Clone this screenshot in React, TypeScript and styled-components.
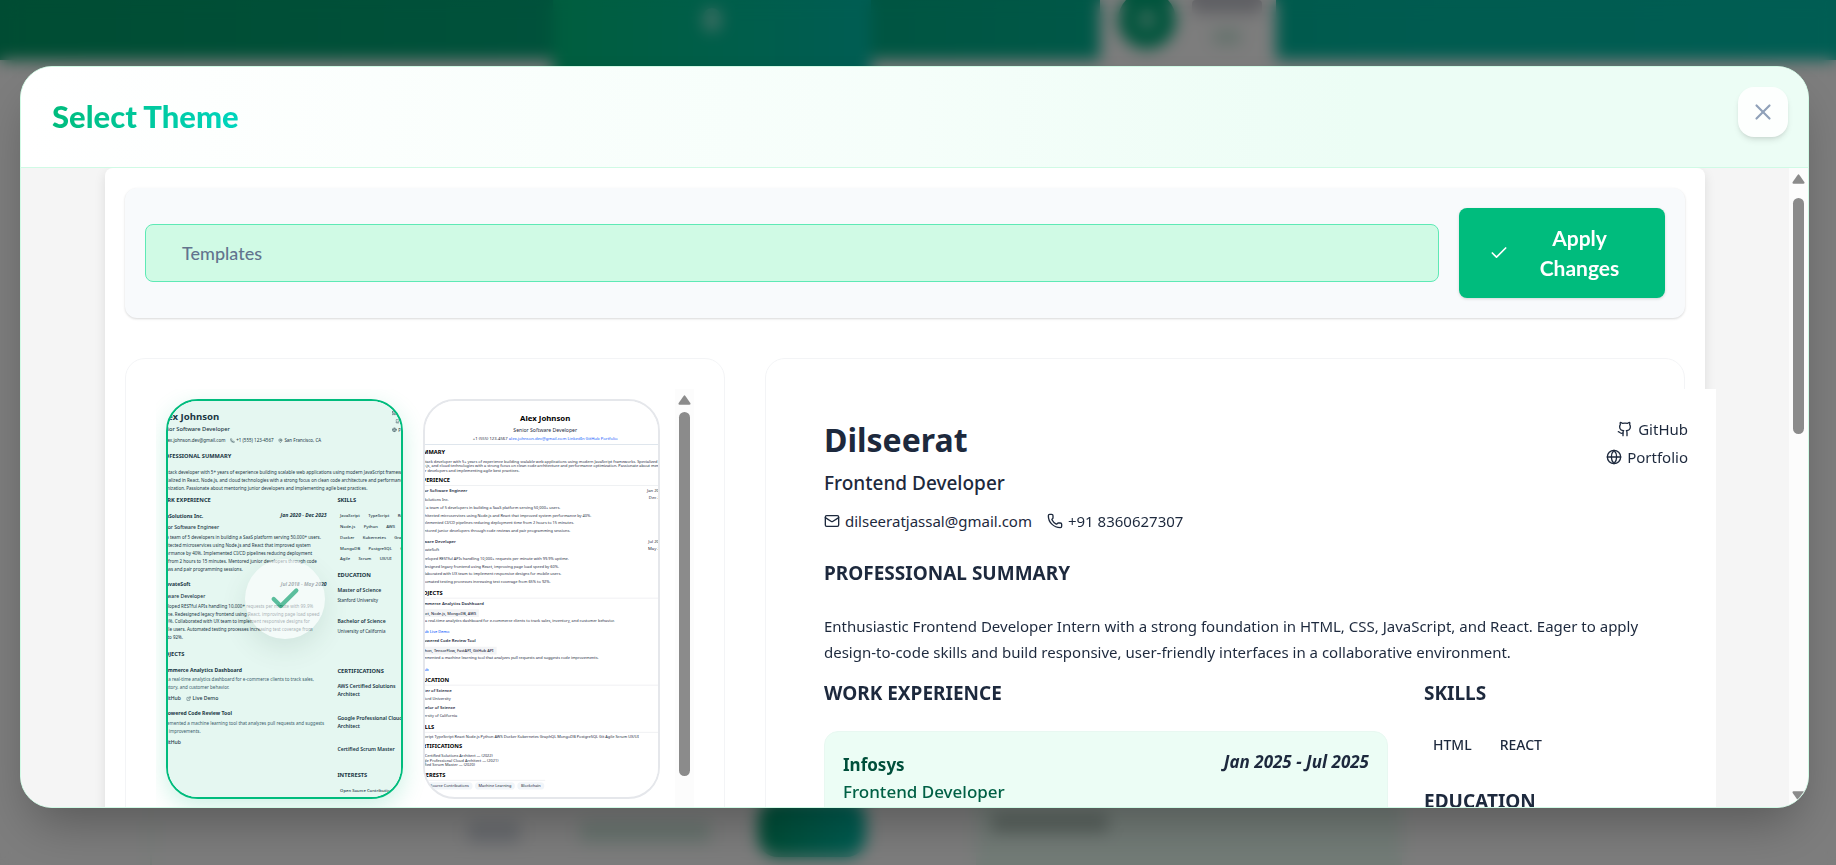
import React from 'react';
import styled, { createGlobalStyle, css } from 'styled-components';
import { Check, ExternalLink, Github, Globe, Linkedin, Mail, MapPin, Phone, X } from 'lucide-react';

const display = `Lato, "Open Sans", sans-serif`;
const body = `"Noto Sans", "Open Sans", sans-serif`;

const GlobalStyle = createGlobalStyle`
  *, *::before, *::after { box-sizing: border-box; }
  html, body, #root { height: 100%; }
  body { margin: 0; overflow: hidden; background: #fafafa; color: #1d293d; font-family: ${body}; }
  h1, h2, h3, h4, p, ul { margin: 0; padding: 0; font: inherit; }
  ul { list-style: none; }
  a { color: inherit; text-decoration: none; }
  button { font: inherit; border: 0; cursor: pointer; }
`;

/* ---------- page behind the dialog ---------- */

const Page = styled.div`
  height: 100vh;
  display: flex;
  flex-direction: column;
  justify-content: space-between;
  overflow: hidden;
`;

const TopBar = styled.header`
  height: 60px;
  display: grid;
  grid-template-columns: 553fr 318fr 229fr 176fr 560fr;
  background: linear-gradient(90deg, #009966, #00a77c 40%, #00b79f 75%, #00bba7);
`;

const TopTab = styled.div`
  grid-column: 2;
  height: 90px;
  padding-top: 8px;
  display: flex;
  justify-content: center;
  background: linear-gradient(90deg, #00bc7d, #00bba7);
`;

const TabDot = styled.span`
  width: 18px;
  height: 24px;
  border-radius: 9px;
  background: rgba(255, 255, 255, 0.5);
`;

const TopCard = styled.div`
  grid-column: 4;
  height: 90px;
  padding: 0 14px 0 18px;
  display: flex;
  gap: 16px;
  background: #fafafa;
`;

const Avatar = styled.span`
  width: 58px;
  height: 58px;
  margin-top: -9px;
  flex: none;
  border-radius: 50%;
  background: radial-gradient(circle, #8fe0c4 4px, #00a878 12px);
`;

const NameBars = styled.div`
  flex: 1;
  display: flex;
  flex-direction: column;
  align-items: center;
  gap: 16px;
`;

const Bar = styled.span<{ $w: string; $h: number; $c: string }>`
  display: block;
  width: ${(p) => p.$w};
  height: ${(p) => p.$h}px;
  border-radius: 4px;
  background: ${(p) => p.$c};
`;

const PageFoot = styled.footer`
  height: 66px;
  display: grid;
  grid-template-columns: 150fr 608fr 108fr 110fr 426fr 434fr;
`;

const FootActions = styled.div`
  grid-column: 2;
  display: flex;
  justify-content: flex-end;
  align-items: center;
  gap: 60px;
  padding-right: 48px;
  border-left: 2px solid #dff5ea;
`;

const FootPill = styled.span`
  height: 58px;
  border-radius: 20px;
  background: linear-gradient(90deg, #00996a, #00bba7);
`;

const FootCard = styled.div`
  grid-column: 5;
  padding: 14px 16px;
  background: #e6f8ef;
`;

/* ---------- dialog ---------- */

const Backdrop = styled.div`
  position: fixed;
  inset: 0;
  display: flex;
  padding: 66px 27px 57px 20px;
  background: rgba(0, 0, 0, 0.5);
  backdrop-filter: blur(8px);
`;

const Dialog = styled.section`
  flex: 1;
  min-width: 0;
  display: flex;
  flex-direction: column;
  overflow: hidden;
  border: 1px solid #d0fae5;
  border-radius: 32px;
  background: #fff;
  box-shadow: 0 25px 50px -12px rgba(0, 0, 0, 0.3);
`;

const DialogHeader = styled.header`
  flex: none;
  display: flex;
  justify-content: space-between;
  align-items: flex-start;
  padding: 0 20px 0 31px;
  border-bottom: 1px solid #d0fae5;
  background: linear-gradient(90deg, #fff, #f5fefa 50%, #ecfdf5 75%, #ecfdf5);
`;

const DialogTitle = styled.h1`
  padding: 28px 0 30px;
  font: 900 31px/42px ${display};
  color: transparent;
  background: linear-gradient(90deg, #00bc7d, #00d5be);
  background-clip: text;
`;

const CloseButton = styled.button`
  width: 50px;
  height: 50px;
  margin-top: 20px;
  display: flex;
  align-items: center;
  justify-content: center;
  border-radius: 16px;
  background: #fdfffe;
  color: #90a1b9;
  box-shadow: 0 4px 6px -1px rgba(0, 0, 0, 0.1), 0 2px 4px -2px rgba(0, 0, 0, 0.1);
`;

const DialogBody = styled.div`
  flex: 1;
  min-height: 0;
  display: flex;
`;

const ScrollArea = styled.div`
  flex: 1;
  min-width: 0;
  overflow: hidden;
  background: #f5f5f5;
`;

const Workspace = styled.main`
  max-width: 1600px;
  margin: 0 auto;
  padding: 20px;
  border-radius: 8px;
  background: #fff;
  box-shadow: 0 4px 12px rgba(0, 0, 0, 0.1);
`;

const Track = styled.div`
  flex: none;
  width: 19px;
  padding: 6px 0;
  display: flex;
  flex-direction: column;
  align-items: center;
  background: #fcfcfc;
`;

const Thumb = styled.span<{ $gap: number; $length: number }>`
  width: 11px;
  height: ${(p) => p.$length}px;
  margin: ${(p) => p.$gap}px 0 auto;
  border-radius: 6px;
  background: #8b8b8b;
`;

function Scrollbar({ gap, length }: { gap: number; length: number }) {
  return (
    <Track aria-hidden="true">
      <svg width="13" height="10" viewBox="0 0 13 10">
        <path d="M5.6.9a1.1 1.1 0 0 1 1.8 0l4.9 7.2c.5.8.1 1.6-.8 1.6H1.5c-.9 0-1.3-.8-.8-1.6z" fill="#8b8b8b" />
      </svg>
      <Thumb $gap={gap} $length={length} />
      <svg width="13" height="10" viewBox="0 0 13 10">
        <path d="M5.6 9.1a1.1 1.1 0 0 0 1.8 0l4.9-7.2c.5-.8.1-1.6-.8-1.6H1.5c-.9 0-1.3.8-.8 1.6z" fill="#8b8b8b" />
      </svg>
    </Track>
  );
}

/* ---------- toolbar ---------- */

const Toolbar = styled.div`
  display: flex;
  align-items: center;
  gap: 20px;
  padding: 20px;
  border-radius: 12px;
  background: #f8fafc;
  box-shadow: 0 1px 3px rgba(0, 0, 0, 0.1), 0 1px 2px rgba(0, 0, 0, 0.06);
`;

const TemplatesTab = styled.button`
  flex: 1;
  padding: 14px 36px;
  border: 1px solid #5ee9b5;
  border-radius: 8px;
  background: #d0fae5;
  color: #62748e;
  font: 500 18px/28px ${display};
  text-align: left;
`;

const ApplyButton = styled.button`
  flex: none;
  width: 206px;
  display: flex;
  align-items: center;
  gap: 15px;
  padding: 15px 30px;
  border-radius: 8px;
  background: #00bc7d;
  color: #fff;
  font: 700 21px/30px ${display};
  box-shadow: 0 1px 3px rgba(0, 0, 0, 0.15);

  svg { flex: none; }
  span { flex: 1; }
`;

/* ---------- panels ---------- */

const Panels = styled.div`
  display: grid;
  grid-template-columns: 600fr 920fr;
  gap: 40px;
  margin-top: 40px;
`;

const Panel = styled.section`
  min-width: 0;
  padding: 30px;
  border: 1px solid #f3f4f6;
  border-radius: 20px;
  background: #fff;
`;

const GalleryScroller = styled.div`
  display: flex;
  height: 500px;
  overflow: hidden;
`;

const Gallery = styled.div`
  flex: 1;
  display: grid;
  grid-template-columns: 1fr 1fr;
  align-content: start;
  gap: 20px;
  padding: 10px 15px 10px 10px;
`;

const TemplateCard = styled.button<{ $selected?: boolean }>`
  position: relative;
  height: 400px;
  min-width: 0;
  display: flex;
  justify-content: center;
  align-items: flex-start;
  padding: 0 0 0 4px;
  overflow: hidden;
  border: 2px solid ${(p) => (p.$selected ? '#00bc7d' : '#e5e7eb')};
  border-radius: 32px;
  background: #fff;
  color: inherit;
  text-align: left;
  ${(p) => p.$selected && css`box-shadow: 0 8px 24px rgba(0, 188, 125, 0.2);`}
`;

const Miniature = styled.div`
  flex: none;
  width: 920px;
  transform: scale(0.3);
  transform-origin: top center;
`;

const SelectedVeil = styled.span`
  position: absolute;
  inset: 0;
  display: flex;
  align-items: center;
  justify-content: center;
  background: rgba(0, 172, 115, 0.1);
`;

const SelectedMark = styled.span`
  width: 80px;
  height: 80px;
  display: flex;
  align-items: center;
  justify-content: center;
  border-radius: 50%;
  background: #fff;
  color: #009966;
  opacity: 0.6;
  box-shadow: 0 10px 25px rgba(0, 60, 40, 0.15);
`;

/* ---------- modern resume ---------- */

const Sheet = styled.article`
  padding: 28px;
  background: #fff;
  font: 400 15px/26px ${body};
  color: #1d293d;
`;

const PreviewSheet = styled(Sheet)`
  width: calc(100% + 62px);
`;

const SheetTop = styled.div`
  display: flex;
  justify-content: space-between;
`;

const PersonName = styled.h2`
  font-size: 32px;
  font-weight: 700;
  line-height: 46px;
`;

const PersonRole = styled.p`
  margin-top: 6px;
  font-size: 19px;
  font-weight: 500;
  line-height: 28px;
`;

const ContactRow = styled.div`
  display: flex;
  gap: 15px;
  margin-top: 12px;
`;

const IconText = styled.span`
  display: flex;
  align-items: center;
  gap: 5px;
  line-height: 24px;
`;

const LinkList = styled.div`
  display: flex;
  flex-direction: column;
  align-items: flex-end;
  gap: 4px;
`;

const Heading = styled.h3<{ $top?: number }>`
  margin-top: ${(p) => p.$top ?? 0}px;
  font-size: 19px;
  font-weight: 700;
  line-height: 28px;
  text-transform: uppercase;
`;

const Summary = styled.p`
  margin: 26px 0 14px;
`;

const Columns = styled.div`
  display: grid;
  grid-template-columns: 1fr 264px;
  gap: 36px;
`;

const Job = styled.div<{ $tinted?: boolean }>`
  margin-top: ${(p) => (p.$tinted ? 24 : 26)}px;
  display: grid;
  grid-template-columns: 1fr auto;
  ${(p) =>
    p.$tinted &&
    css`
      padding: 19px 18px;
      border: 1px solid #e8f8f1;
      border-radius: 14px;
      background: #ecfdf5;
    `}
`;

const Company = styled.h4<{ $tinted?: boolean }>`
  font-size: 17px;
  font-weight: 700;
  line-height: 27px;
  color: ${(p) => (p.$tinted ? '#004f3b' : '#1d293d')};
`;

const JobRole = styled.p<{ $tinted?: boolean }>`
  grid-column: 1 / -1;
  margin-top: ${(p) => (p.$tinted ? 0 : 10)}px;
  font-size: 17px;
  font-weight: 500;
  line-height: 27px;
  color: ${(p) => (p.$tinted ? '#006045' : '#1d293d')};
`;

const JobText = styled.p`
  grid-column: 1 / -1;
  margin-top: 8px;
  padding-right: 14px;
`;

const Dates = styled.span`
  font-size: 17px;
  font-style: italic;
  font-weight: 700;
  line-height: 22px;
`;

const Chips = styled.ul`
  display: flex;
  flex-wrap: wrap;
  gap: 8px 10px;
  margin-top: 24px;
`;

const Chip = styled.li`
  padding: 0 9px;
  font-size: 14px;
  font-weight: 500;
  line-height: 28px;
`;

const Project = styled.div<{ $top: number }>`
  margin-top: ${(p) => p.$top}px;
`;

const ProjectText = styled.p`
  margin-top: 5px;
  color: #45556c;
`;

const ProjectLinks = styled.div`
  display: flex;
  gap: 18px;
  margin-top: 14px;
  font-size: 17px;
  font-weight: 500;
`;

const SideItem = styled.div<{ $top: number }>`
  margin-top: ${(p) => p.$top}px;
`;

const SideTitle = styled.h4`
  padding-right: 20px;
  font-size: 17px;
  font-weight: 600;
  line-height: 26px;
`;

const SideText = styled.p`
  margin-top: 7px;
`;

function ResumePreview() {
  return (
    <PreviewSheet>
      <SheetTop>
        <div>
          <PersonName>Dilseerat</PersonName>
          <PersonRole>Frontend Developer</PersonRole>
          <ContactRow>
            <IconText><Mail size={16} /> dilseeratjassal@gmail.com</IconText>
            <IconText><Phone size={16} /> +91 8360627307</IconText>
          </ContactRow>
        </div>
        <LinkList>
          <a href="#github"><IconText><Github size={16} /> GitHub</IconText></a>
          <a href="#portfolio"><IconText><Globe size={16} /> Portfolio</IconText></a>
        </LinkList>
      </SheetTop>
      <Heading $top={26}>Professional Summary</Heading>
      <Summary>
        Enthusiastic Frontend Developer Intern with a strong foundation in HTML, CSS, JavaScript, and React. Eager to
        apply design-to-code skills and build responsive, user-friendly interfaces in a collaborative environment.
      </Summary>
      <Columns>
        <div>
          <Heading>Work Experience</Heading>
          <Job $tinted>
            <Company $tinted>Infosys</Company>
            <Dates>Jan 2025 - Jul 2025</Dates>
            <JobRole $tinted>Frontend Developer</JobRole>
          </Job>
        </div>
        <div>
          <Heading>Skills</Heading>
          <Chips>
            <Chip>HTML</Chip>
            <Chip>REACT</Chip>
          </Chips>
          <Heading $top={28}>Education</Heading>
        </div>
      </Columns>
    </PreviewSheet>
  );
}

const skills = ['JavaScript', 'TypeScript', 'React', 'Node.js', 'Python', 'AWS', 'Docker', 'Kubernetes', 'GraphQL', 'MongoDB', 'PostgreSQL', 'Git', 'Agile', 'Scrum', 'UX/UI'];

function ModernTemplate() {
  return (
    <Sheet>
      <SheetTop>
        <div>
          <PersonName>Alex Johnson</PersonName>
          <PersonRole>Senior Software Developer</PersonRole>
          <ContactRow>
            <IconText><Mail size={16} /> alex.johnson.dev@gmail.com</IconText>
            <IconText><Phone size={16} /> +1 (555) 123-4567</IconText>
            <IconText><MapPin size={16} /> San Francisco, CA</IconText>
          </ContactRow>
        </div>
        <LinkList>
          <IconText><Linkedin size={16} /> LinkedIn</IconText>
          <IconText><Github size={16} /> GitHub</IconText>
          <IconText><Globe size={16} /> Portfolio</IconText>
        </LinkList>
      </SheetTop>
      <Heading $top={26}>Professional Summary</Heading>
      <Summary>
        Full-stack developer with 5+ years of experience building scalable web applications using modern JavaScript
        frameworks. Specialized in React, Node.js, and cloud technologies with a strong focus on clean code architecture
        and performance optimization. Passionate about mentoring junior developers and implementing agile best practices.
      </Summary>
      <Columns>
        <div>
          <Heading>Work Experience</Heading>
          <Job>
            <Company>TechSolutions Inc.</Company>
            <Dates>Jan 2020 - Dec 2023</Dates>
            <JobRole>Senior Software Engineer</JobRole>
            <JobText>
              Led a team of 5 developers in building a SaaS platform serving 50,000+ users. Architected microservices
              using Node.js and React that improved system performance by 40%. Implemented CI/CD pipelines reducing
              deployment time from 2 hours to 15 minutes. Mentored junior developers through code reviews and pair
              programming sessions.
            </JobText>
          </Job>
          <Job>
            <Company>InnovateSoft</Company>
            <Dates>Jul 2018 - May 2020</Dates>
            <JobRole>Software Developer</JobRole>
            <JobText>
              Developed RESTful APIs handling 10,000+ requests per minute with 99.9% uptime. Redesigned legacy frontend
              using React, improving page load speed by 60%. Collaborated with UX team to implement responsive designs
              for mobile users. Automated testing processes increasing test coverage from 65% to 92%.
            </JobText>
          </Job>
          <Heading $top={30}>Projects</Heading>
          <Project $top={24}>
            <Company>E-commerce Analytics Dashboard</Company>
            <ProjectText>
              Built a real-time analytics dashboard for e-commerce clients to track sales, inventory, and customer
              behavior.
            </ProjectText>
            <ProjectLinks>
              <IconText><Github size={16} /> GitHub</IconText>
              <IconText><ExternalLink size={16} /> Live Demo</IconText>
            </ProjectLinks>
          </Project>
          <Project $top={24}>
            <Company>AI-powered Code Review Tool</Company>
            <ProjectText>
              Implemented a machine learning tool that analyzes pull requests and suggests code improvements.
            </ProjectText>
            <ProjectLinks>
              <IconText><Github size={16} /> GitHub</IconText>
            </ProjectLinks>
          </Project>
        </div>
        <div>
          <Heading>Skills</Heading>
          <Chips>
            {skills.map((s) => <Chip key={s}>{s}</Chip>)}
          </Chips>
          <Heading $top={26}>Education</Heading>
          <SideItem $top={24}>
            <SideTitle>Master of Science</SideTitle>
            <SideText>Stanford University</SideText>
          </SideItem>
          <SideItem $top={44}>
            <SideTitle>Bachelor of Science</SideTitle>
            <SideText>University of California</SideText>
          </SideItem>
          <Heading $top={107}>Certifications</Heading>
          <SideItem $top={24}><SideTitle>AWS Certified Solutions Architect</SideTitle></SideItem>
          <SideItem $top={54}><SideTitle>Google Professional Cloud Architect</SideTitle></SideItem>
          <SideItem $top={50}><SideTitle>Certified Scrum Master</SideTitle></SideItem>
          <Heading $top={60}>Interests</Heading>
          <Chips>
            <Chip>Open Source Contribution</Chip>
          </Chips>
        </div>
      </Columns>
    </Sheet>
  );
}

/* ---------- classic resume ---------- */

const ClassicSheet = styled.article`
  padding: 40px 24px 0 32px;
  background: #fff;
  font: 400 13px/15px ${body};
  color: #1d293d;
`;

const ClassicName = styled.h2`
  font-size: 26px;
  font-weight: 700;
  line-height: 34px;
  color: #000;
  text-align: center;
`;

const ClassicRole = styled.p`
  margin-top: 8px;
  font-size: 17px;
  line-height: 30px;
  text-align: center;
`;

const ClassicContact = styled.p`
  padding-bottom: 6px;
  border-bottom: 2px solid #cad5e2;
  font-size: 14px;
  line-height: 26px;
  text-align: center;
`;

const BlueText = styled.span`
  color: #155dfc;
`;

const ClassicHeading = styled.h3<{ $plain?: boolean; $short?: boolean }>`
  width: ${(p) => (p.$short ? '50%' : 'auto')};
  margin: 11px 0 4px;
  padding-bottom: 5px;
  border-bottom: ${(p) => (p.$plain ? '2px solid transparent' : '2px solid #e5e7eb')};
  font-size: 19px;
  font-weight: 700;
  line-height: 26px;
  color: #000;
  text-transform: uppercase;
`;

const ClassicLine = styled.div`
  display: flex;
  justify-content: space-between;
  font-size: 14px;
  font-weight: 600;
  line-height: 24px;
`;

const ClassicDates = styled.span`
  width: 80px;
  height: 24px;
  margin-right: 26px;
  font-size: 14px;
  font-weight: 400;
  text-align: right;
`;

const ClassicSub = styled.p`
  margin: 4px 0 5px;
  line-height: 24px;
`;

const Bullets = styled.ul`
  margin-bottom: 12px;
  padding-left: 10px;
  line-height: 25px;
`;

const Tag = styled.span`
  display: inline-block;
  margin: 8px 0 4px;
  padding: 0 10px;
  background: #f3f4f6;
  font-weight: 500;
  line-height: 26px;
`;

const ClassicLink = styled.p`
  margin: 20px 0 8px;
  color: #155dfc;
  font-weight: 500;
  line-height: 20px;
`;

const ClassicList = styled.p`
  line-height: 16px;
`;

const RoundTags = styled.ul`
  display: flex;
  flex-wrap: wrap;
  width: 52%;
  gap: 8px;
  margin-top: 6px;
`;

const RoundTag = styled.li`
  padding: 0 12px;
  border-radius: 12px;
  background: #f1f5f9;
  line-height: 24px;
`;

function ClassicTemplate() {
  return (
    <ClassicSheet>
      <ClassicName>Alex Johnson</ClassicName>
      <ClassicRole>Senior Software Developer</ClassicRole>
      <ClassicContact>
        +1 (555) 123-4567 <BlueText>alex.johnson.dev@gmail.com LinkedIn GitHub Portfolio</BlueText>
      </ClassicContact>
      <ClassicHeading $plain>Summary</ClassicHeading>
      <p>
        Full-stack developer with 5+ years of experience building scalable web applications using modern JavaScript
        frameworks. Specialized in React, Node.js, and cloud technologies with a strong focus on clean code architecture
        and performance optimization. Passionate about mentoring junior developers and implementing agile best practices.
      </p>
      <ClassicHeading>Experience</ClassicHeading>
      <ClassicLine>Senior Software Engineer <ClassicDates>Jan 2020 – Dec 2023</ClassicDates></ClassicLine>
      <ClassicSub>TechSolutions Inc.</ClassicSub>
      <Bullets>
        <li>Led a team of 5 developers in building a SaaS platform serving 50,000+ users.</li>
        <li>Architected microservices using Node.js and React that improved system performance by 40%.</li>
        <li>Implemented CI/CD pipelines reducing deployment time from 2 hours to 15 minutes.</li>
        <li>Mentored junior developers through code reviews and pair programming sessions.</li>
      </Bullets>
      <ClassicLine>Software Developer <ClassicDates>Jul 2018 – May 2020</ClassicDates></ClassicLine>
      <ClassicSub>InnovateSoft</ClassicSub>
      <Bullets>
        <li>Developed RESTful APIs handling 10,000+ requests per minute with 99.9% uptime.</li>
        <li>Redesigned legacy frontend using React, improving page load speed by 60%.</li>
        <li>Collaborated with UX team to implement responsive designs for mobile users.</li>
        <li>Automated testing processes increasing test coverage from 65% to 92%.</li>
      </Bullets>
      <ClassicHeading>Projects</ClassicHeading>
      <ClassicLine>E-commerce Analytics Dashboard</ClassicLine>
      <Tag>React, Node.js, MongoDB, AWS</Tag>
      <p>Built a real-time analytics dashboard for e-commerce clients to track sales, inventory, and customer behavior.</p>
      <ClassicLink>GitHub Live Demo</ClassicLink>
      <ClassicLine>AI-powered Code Review Tool</ClassicLine>
      <Tag>Python, TensorFlow, FastAPI, GitHub API</Tag>
      <p>Implemented a machine learning tool that analyzes pull requests and suggests code improvements.</p>
      <ClassicLink>GitHub</ClassicLink>
      <ClassicHeading>Education</ClassicHeading>
      <ClassicLine>Master of Science</ClassicLine>
      <ClassicSub>Stanford University</ClassicSub>
      <ClassicLine>Bachelor of Science</ClassicLine>
      <ClassicSub>University of California</ClassicSub>
      <ClassicHeading>Skills</ClassicHeading>
      <ClassicList>JavaScript TypeScript React Node.js Python AWS Docker Kubernetes GraphQL MongoDB PostgreSQL Git Agile Scrum UX/UI</ClassicList>
      <ClassicHeading $plain>Certifications</ClassicHeading>
      <ClassicList>AWS Certified Solutions Architect — (2022)</ClassicList>
      <ClassicList>Google Professional Cloud Architect — (2021)</ClassicList>
      <ClassicList>Certified Scrum Master — (2020)</ClassicList>
      <ClassicHeading $short>Interests</ClassicHeading>
      <RoundTags>
        <RoundTag>Open Source Contributions</RoundTag>
        <RoundTag>Machine Learning</RoundTag>
        <RoundTag>Blockchain</RoundTag>
      </RoundTags>
    </ClassicSheet>
  );
}

/* ---------- app ---------- */

export default function App() {
  return (
    <>
      <GlobalStyle />
      <Page aria-hidden="true">
        <TopBar>
          <TopTab><TabDot /></TopTab>
          <TopCard>
            <Avatar />
            <NameBars>
              <Bar $w="100%" $h={14} $c="#bfc0c8" />
              <Bar $w="40%" $h={14} $c="#c5e2d6" />
            </NameBars>
          </TopCard>
        </TopBar>
        <PageFoot>
          <FootActions>
            <Bar $w="52px" $h={22} $c="#d3d8e0" />
            <Bar $w="130px" $h={22} $c="#d4ebe1" />
          </FootActions>
          <FootPill />
          <FootCard><Bar $w="116px" $h={20} $c="#b5c8bf" /></FootCard>
        </PageFoot>
      </Page>
      <Backdrop>
        <Dialog role="dialog" aria-modal="true" aria-labelledby="theme-title">
          <DialogHeader>
            <DialogTitle id="theme-title">Select Theme</DialogTitle>
            <CloseButton type="button" aria-label="Close"><X size={26} /></CloseButton>
          </DialogHeader>
          <DialogBody>
            <ScrollArea>
              <Workspace>
                <Toolbar>
                  <TemplatesTab type="button">Templates</TemplatesTab>
                  <ApplyButton type="button">
                    <Check size={20} />
                    <span>Apply Changes</span>
                  </ApplyButton>
                </Toolbar>
                <Panels>
                  <Panel aria-label="Templates">
                    <GalleryScroller>
                      <Gallery>
                        <TemplateCard type="button" $selected aria-pressed="true" aria-label="Modern template">
                          <Miniature><ModernTemplate /></Miniature>
                          <SelectedVeil><SelectedMark><Check size={34} strokeWidth={3} /></SelectedMark></SelectedVeil>
                        </TemplateCard>
                        <TemplateCard type="button" aria-pressed="false" aria-label="Classic template">
                          <Miniature><ClassicTemplate /></Miniature>
                        </TemplateCard>
                      </Gallery>
                      <Scrollbar gap={7} length={364} />
                    </GalleryScroller>
                  </Panel>
                  <Panel aria-label="Preview">
                    <ResumePreview />
                  </Panel>
                </Panels>
              </Workspace>
            </ScrollArea>
            <Scrollbar gap={14} length={236} />
          </DialogBody>
        </Dialog>
      </Backdrop>
    </>
  );
}
